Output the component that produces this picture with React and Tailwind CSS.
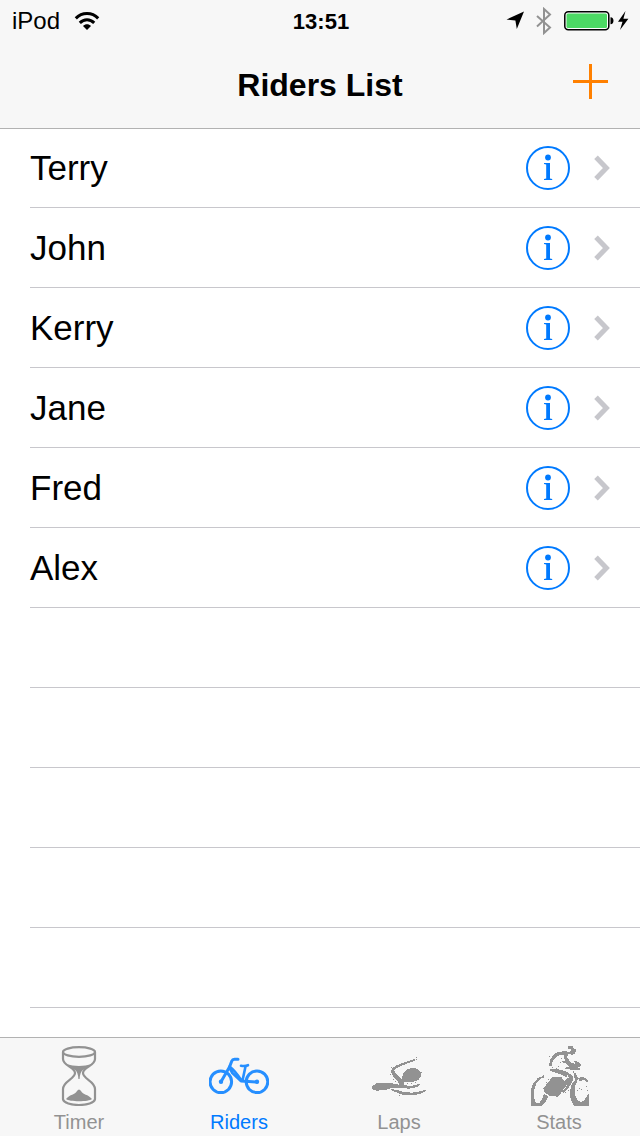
import React from 'react';

const riders = ['Terry', 'John', 'Kerry', 'Jane', 'Fred', 'Alex'];
const emptyRows = [1, 2, 3, 4, 5];

function WifiIcon() {
  return (
    <svg className="h-5 w-[26px]" viewBox="0 0 26 20" fill="none" stroke="#000" strokeWidth="3" aria-hidden="true">
      <path d="M1.8 7.4C8 .8 18 .8 24.2 7.4" />
      <path d="M5.8 11.9C10 7.7 16 7.7 20.2 11.9" />
      <path d="M9 15C11.2 12.8 14.8 12.8 17 15L13 19Z" fill="#000" stroke="none" />
    </svg>
  );
}

function StatusIcons() {
  return (
    <svg className="h-7 w-[124px]" viewBox="0 0 124 28" aria-hidden="true">
      <path d="M18 4.5L10.8 22L9.4 13.6L0.5 12.5Z" fill="#000" />
      <path d="M31 9L44 20.5L38 26V2L44 7.5L31 19.5" fill="none" stroke="#929292" strokeWidth="2" />
      <rect x="58.8" y="4.8" width="44" height="18" rx="3.5" fill="#fff" stroke="#000" strokeWidth="1.5" />
      <rect x="60.5" y="6.5" width="40.5" height="14.5" rx="1.5" fill="#4cd964" />
      <path d="M104.5 10.3C108.5 10.3 108.5 17.3 104.5 17.3Z" fill="#000" />
      <path d="M119.5 4L112 14.8H116.5L114 23L122.4 11.8H117.4Z" fill="#000" />
    </svg>
  );
}

function InfoIcon() {
  return (
    <svg className="size-11" viewBox="0 0 44 44" aria-hidden="true">
      <circle cx="22" cy="22" r="21" fill="none" stroke="#007aff" strokeWidth="2" />
      <circle cx="22" cy="11.5" r="2.9" fill="#007aff" />
      <path d="M18 17H24V32.5L26.2 33V34H18V33L20.2 32.5V18.5L18 18Z" fill="#007aff" />
    </svg>
  );
}

function Chevron() {
  return (
    <svg className="h-[26px] w-4" viewBox="0 0 16 26" fill="none" stroke="#c7c7cc" strokeWidth="5" aria-hidden="true">
      <path d="M2 2.2L12.4 13L2 23.8" />
    </svg>
  );
}

function TimerIcon() {
  return (
    <svg className="size-15" viewBox="0 0 60 60" aria-hidden="true">
      <g fill="none" stroke="#929292" strokeWidth="2.2">
        <ellipse cx="30" cy="6" rx="16" ry="4.8" />
        <path d="M14 6V13C14 20 26 21 26 27C26 33 14 35 14 43V53C15 61 45 61 46 53V43C46 35 34 33 34 27C34 21 46 20 46 13V6" />
      </g>
      <path d="M17 18Q30 22 43 18Q39 22 34 24Q31 26 30.6 33H29.4Q29 26 26 24Q21 22 17 18Z" fill="#929292" />
      <path d="M17 53C21 48 26 49 28 45Q30 42 32 45C34 49 39 48 43 53C40 56 20 56 17 53Z" fill="#929292" />
    </svg>
  );
}

function BikeIcon() {
  return (
    <svg className="size-15" viewBox="0 0 60 60" fill="none" stroke="#268fff" strokeWidth="3" strokeLinecap="round" strokeLinejoin="round" aria-hidden="true">
      <circle cx="11.8" cy="35.8" r="10.8" />
      <circle cx="48" cy="35.8" r="10.8" />
      <path d="M29 13.2H25.5Q23.5 13.2 22.8 15L20.5 21L12 35.8M20.5 21L23.5 27L32 35L48 36" />
      <path d="M20.5 20.5Q26 24.5 32.5 34.5M32 19.7Q36 20.5 39 19.2M36.5 20.5L33.5 34.5" strokeWidth="2.6" />
      <circle cx="12" cy="35.8" r="2.2" fill="#268fff" stroke="none" />
      <circle cx="48" cy="35.8" r="2.2" fill="#268fff" stroke="none" />
    </svg>
  );
}

function SwimIcon() {
  return (
    <svg className="size-15" viewBox="0 0 180 180" fill="#929292" shapeRendering="crispEdges" aria-hidden="true">
      <path d="M138 38V44L108 55L84 66L76 74L80 82L90 92L98 98L104 80L114 70L128 66L146 68L155 78L156 90L148 102L130 108H106L104 116H90L86 106L72 90L66 76L70 66L82 58L104 50Z" />
      <path d="M9 122L22 112L60 111L82 114L94 118L130 119L152 113L154 117L142 124L120 128L90 126L66 126L50 132L22 134L10 130Z" />
      <path d="M66 129L84 132L104 138L128 140L154 136L170 131V136L150 145L120 148L96 145L80 138L68 133Z" />
      <path d="M142 33h3v3h-3zM142 39h3v3h-3zM63 84h3v3h-3zM72 99h3v3h-3zM78 105h3v3h-3zM90 147h3v3h-3zM138 108h3v3h-3zM126 111h3v3h-3zM114 111h3v3h-3zM156 78h3v3h-3zM66 63h3v3h-3z" />
    </svg>
  );
}

function StatsIcon() {
  return (
    <svg className="size-15" viewBox="0 0 180 180" fill="#929292" shapeRendering="crispEdges" aria-hidden="true">
      <path d="M118 0H130L135 8H141L139 22L130 27L116 23V19L124 17L126 11L117 8Z" />
      <path d="M60 60L63 42L74 25L90 17L112 16L120 22L114 34L106 40L105 28H90L78 36L70 48L68 60Z" />
      <path d="M108 33L116 36L124 48L138 54L136 44L148 48L156 54L154 62L145 64L154 68V72H130L108 68L112 63H122L114 54L98 48V45H108Z" />
      <path d="M63 69H86L110 76L118 84L112 94L98 86L84 81L64 75Z" />
      <path d="M70 94H98L106 106L112 98L120 94L124 100L112 118L98 138L88 152L62 150L46 138L43 128L56 110Z" />
      <path d="M114 76L132 92L132 104L116 130L104 140L99 137L112 122L122 102L118 92Z" />
      <path d="M46 88V95L34 98L22 112L16 130V158L20 170L30 172L40 158L42 150L46 144L58 152L50 168L38 180H6V132L12 112L26 97Z" />
      <path d="M133 78L140 82L148 96L144 108L138 120V146L144 160L156 170L168 160L177 144H180V180H136L126 164L122 138L128 116L138 102Z" />
      <path d="M147 96L160 92L172 98L178 106V111L166 103L150 104Z" />
      <path d="M42 87h3v3h-3zM60 30h3v3h-3zM68 64h3v3h-3zM94 48h3v3h-3zM88 60h3v3h-3zM81 66h3v3h-3zM96 36h3v3h-3zM51 108h3v3h-3zM57 99h3v3h-3zM108 138h3v3h-3zM117 132h3v3h-3zM171 120h3v3h-3zM174 132h3v3h-3zM156 129h3v3h-3zM150 126h3v3h-3zM144 132h3v3h-3zM132 75h3v3h-3z" />
    </svg>
  );
}

const tabs = [
  { label: 'Timer', Icon: TimerIcon },
  { label: 'Riders', Icon: BikeIcon, active: true },
  { label: 'Laps', Icon: SwimIcon },
  { label: 'Stats', Icon: StatsIcon },
];

export default function App() {
  return (
    <div className="flex h-screen flex-col bg-white font-['Liberation_Sans',Arial,sans-serif] text-black">
      <header className="relative shrink-0 bg-[#f7f7f7] shadow-[0_1px_0_#b2b2b2]">
        <div className="grid h-[42px] grid-cols-[1fr_auto_1fr] items-center pr-2.5 pl-3">
          <div className="flex items-center gap-3.5">
            <span className="text-2xl">iPod</span>
            <WifiIcon />
          </div>
          <time className="text-[22px] font-bold">13:51</time>
          <div className="flex justify-end">
            <StatusIcons />
          </div>
        </div>
        <div className="grid h-[86px] grid-cols-[1fr_auto_1fr] items-center px-8">
          <h1 className="col-start-2 text-[32px] leading-10 font-bold">Riders List</h1>
          <button type="button" aria-label="Add rider" className="mb-2 justify-self-end">
            <svg className="size-[35px]" viewBox="0 0 35 35" stroke="#ff8000" strokeWidth="3" aria-hidden="true">
              <path d="M17.5 0V35M0 17.5H35" />
            </svg>
          </button>
        </div>
      </header>

      <main className="min-h-0 flex-1 overflow-hidden">
        <ul className="pl-[30px]">
          {riders.map((name) => (
            <li key={name} className="flex h-20 items-center border-b border-[#c8c7cc]">
              <span className="flex-1 text-[35px] leading-10">{name}</span>
              <button type="button" aria-label={`Details for ${name}`} className="mr-6">
                <InfoIcon />
              </button>
              <a href="#rider" aria-label={`Open ${name}`} className="mr-[30px]">
                <Chevron />
              </a>
            </li>
          ))}
          {emptyRows.map((row) => (
            <li key={row} aria-hidden="true" className="h-20 border-b border-[#c8c7cc]" />
          ))}
        </ul>
      </main>

      <nav className="grid shrink-0 grid-cols-4 border-t border-[#b2b2b2] bg-[#f7f7f7]">
        {tabs.map(({ label, Icon, active }) => (
          <button
            key={label}
            type="button"
            aria-current={active ? 'page' : undefined}
            className={
              active
                ? 'flex flex-col items-center gap-1 pt-2 pr-0.5 pb-0.5 text-[#007aff]'
                : 'flex flex-col items-center gap-1 pt-2 pr-0.5 pb-0.5 text-[#929292]'
            }
          >
            <Icon />
            <span className="text-xl leading-6">{label}</span>
          </button>
        ))}
      </nav>
    </div>
  );
}
